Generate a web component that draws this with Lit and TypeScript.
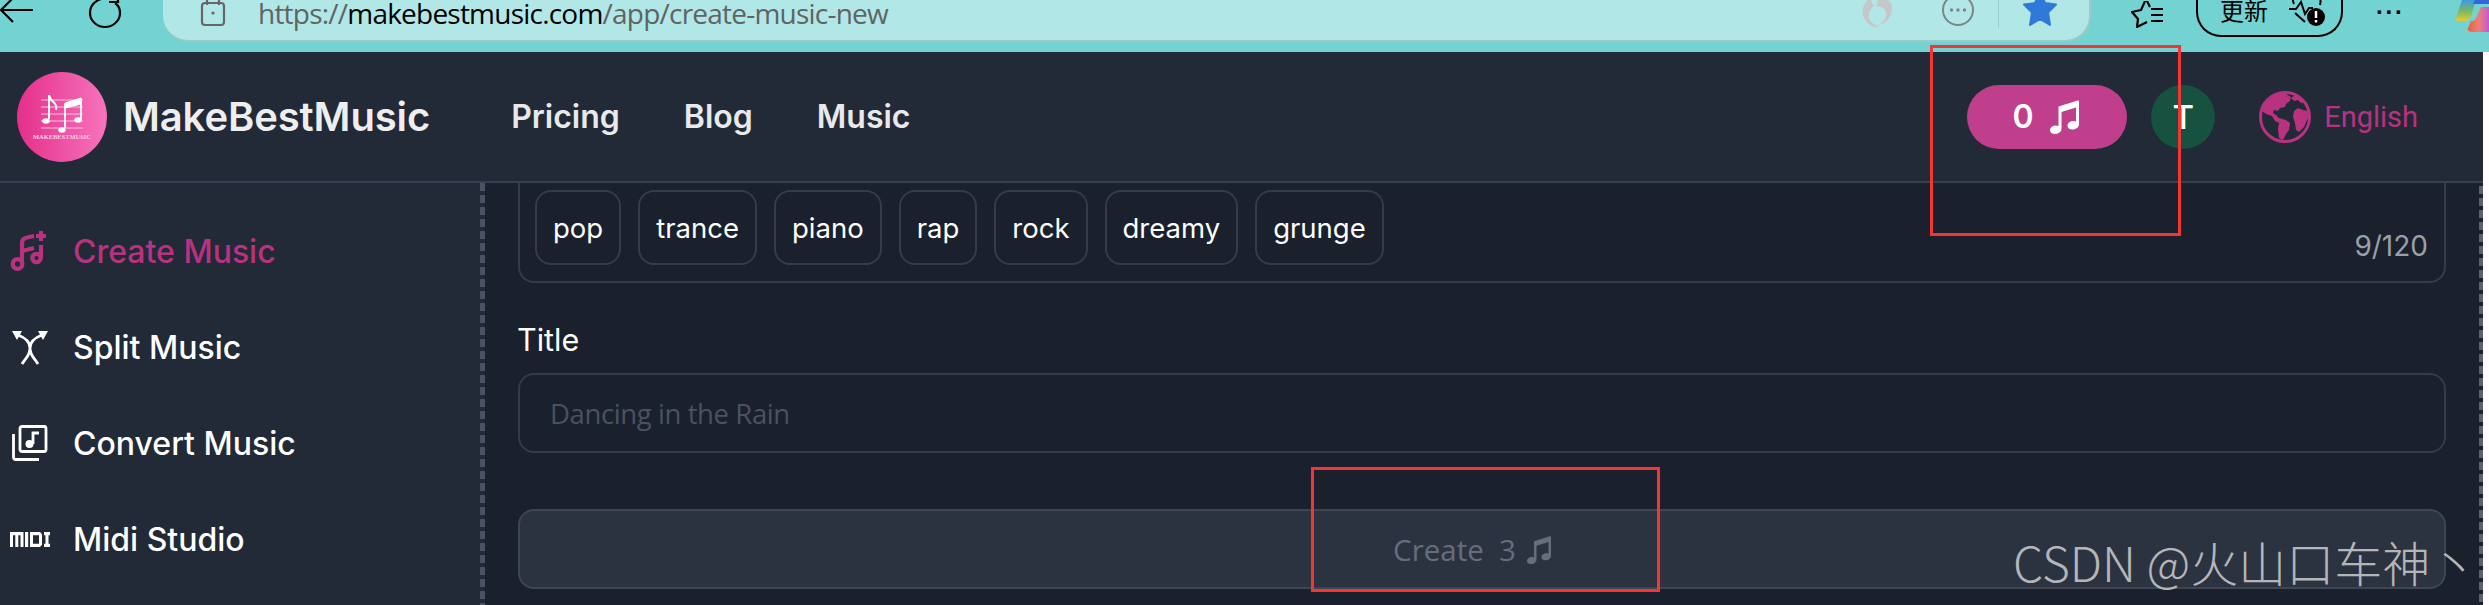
import { LitElement, html, css, svg } from "lit";
import { customElement } from "lit/decorators.js";

const note = svg`<path fill="currentColor" d="M8.500 7.500 27.500 1.500c.8-.2 1.500.3 1.500 1.200V25c0 3.200-2.900 5.500-6.400 5.500-3.200 0-5.100-1.500-5.100-3.700 0-2.700 2.900-4.700 6-4.700 1 0 1.800.2 2.500.5V8.500L11.500 13v16.500c0 3.200-2.900 5.500-6.400 5.500C2 35 0 33.500 0 31.300c0-2.700 2.900-4.700 6-4.700 1 0 1.800.2 2.500.5z"/>`;

@customElement("app-root")
export class AppRoot extends LitElement {
  static styles = css`
    :host { display: block; width: 2489px; height: 605px; overflow: hidden; position: relative; background: #fff; font-family: Inter, "Liberation Sans", sans-serif; }
    .chrome { height: 52px; background: #73d2d2; display: flex; align-items: flex-start; overflow: hidden; position: relative; color: #000; }
    .nav { width: 163px; flex: none; display: flex; gap: 52px; height: 42px; }
    .nav svg { flex: none; }
    .addr { width: 1928px; flex: none; height: 42px; box-sizing: border-box; background: #b1e8e7; border-bottom: 2px solid #9fc8c8; border-right: 2px solid #9fc8c8; border-radius: 0 0 26px 26px; display: flex; align-items: center; padding: 0 0 14px 37px; }
    .lock { flex: none; margin-right: 32px; }
    .url { font: 400 28px "Open Sans", sans-serif; color: #5f6464; white-space: nowrap; flex: 1; letter-spacing: -0.78px; }
    .url b { font-weight: 400; color: #000; }
    .addr-icons { display: flex; align-items: center; margin-right: 32px; }
    .sep { width: 1px; height: 30px; background: #97d0cf; margin: 0 24px; }
    .tools { display: flex; align-items: center; height: 42px; padding-bottom: 10px; box-sizing: border-box; margin-left: 40px; flex: none; }
    .update { width: 147px; height: 42px; margin: -1px 0 0 31px; box-sizing: border-box; border: 2px solid #000; border-top: none; border-radius: 0 0 25px 25px; display: flex; align-items: center; gap: 21px; padding: 0 0 10px 22px; font: 400 24px "Noto Sans CJK SC", sans-serif; }
    .dots { font: 700 24px "Liberation Sans", sans-serif; letter-spacing: 1.5px; margin-left: 33px; margin-top: -8px; }
    .copilot { position: absolute; left: 2453px; top: 0; }
    header { width: 2483px; height: 131px; box-sizing: border-box; background: #222937; border-bottom: 2px solid #374050; display: flex; align-items: center; padding: 0 65px 0 17px; }
    .brand { font-weight: 600; font-size: 40px; color: #eeeeef; margin-left: 16px; white-space: nowrap; letter-spacing: -0.12px; }
    .logo { flex: none; }
    .links { display: flex; gap: 64px; margin-left: 81px; flex: 1; }
    .links a { font-weight: 600; font-size: 32px; color: #e8e9eb; }
    .pill { width: 160px; height: 64px; border-radius: 32px; background: #bf3f8d; color: #fff; display: flex; align-items: center; justify-content: center; gap: 16px; font-weight: 600; font-size: 32px; flex: none; padding-right: 3px; box-sizing: border-box; }
    .avatar { width: 64px; height: 64px; border-radius: 50%; background: #175140; color: #fff; display: flex; align-items: center; justify-content: center; font-size: 33px; font-weight: 500; margin-left: 24px; flex: none; }
    .lang { display: flex; align-items: center; gap: 13px; margin-left: 44px; color: #b83280; font: 400 29px Roboto, sans-serif; flex: none; }
    .body { display: flex; width: 2483px; height: 422px; background: #1a202c; }
    aside { width: 480px; flex: none; box-sizing: border-box; background: #222937; display: flex; flex-direction: column; padding-top: 20px; }
    .dash-left { width: 5px; flex: none; background: repeating-linear-gradient(#4b5362 0 8px, #222937 8px 12px); }
    .dash-right { width: 4px; flex: none; background: repeating-linear-gradient(transparent 0 3px, #5a6170 3px 11px, transparent 11px 12px); }
    .item { height: 96px; display: flex; align-items: center; color: #fff; font-size: 32px; font-weight: 500; white-space: nowrap; }
    .item.on { color: #b83280; }
    .ic { width: 73px; flex: none; display: flex; justify-content: center; padding-right: 14px; box-sizing: border-box; }
    main { flex: 1; box-sizing: border-box; padding: 0 0 0 33px; display: flex; flex-direction: column; min-width: 0; }
    .tags { width: 1928px; height: 100px; box-sizing: border-box; border: 2px solid #343b49; border-top: none; border-radius: 0 0 16px 16px; display: flex; gap: 17px; padding: 7px 0 0 15px; position: relative; }
    .chip { height: 75px; box-sizing: border-box; border: 2px solid #343b49; border-radius: 16px; padding: 0 16px; display: flex; align-items: center; color: #fff; font-size: 27.500px; }
    .count { position: absolute; right: 16px; bottom: 18px; color: #9aa0a9; font-size: 28px; }
    .label { color: #fff; font-size: 30.500px; margin: 37px 0 0 -1px; line-height: 40px; }
    .input { width: 1928px; height: 80px; margin-top: 13px; box-sizing: border-box; border: 2px solid #343b49; border-radius: 16px; padding-left: 30px; display: flex; align-items: center; color: #4a5260; font: 400 27.500px "Open Sans", sans-serif; letter-spacing: -0.4px; }
    .btn { width: 1928px; height: 80px; margin-top: 56px; box-sizing: border-box; border: 2px solid #3f4552; border-radius: 16px; background: #2c3340; color: #666e7b; display: flex; align-items: center; justify-content: center; font: 400 29.500px "Open Sans", sans-serif; gap: 11px; white-space: pre; padding-right: 20px; }
    .red { position: absolute; box-sizing: border-box; border: 3px solid #f53535; pointer-events: none; }
    .r1 { left: 1930px; top: 45px; width: 251px; height: 191px; }
    .r2 { left: 1311px; top: 467px; width: 349px; height: 125px; }
    .mark { position: absolute; left: 2013px; top: 526px; font: 300 48px "Noto Sans CJK SC", sans-serif; line-height: 70px; color: #b5b6b9; white-space: nowrap; }
  `;

  render() {
    return html`
      <div class="chrome">
        <div class="nav">
          <svg width="36" height="30" viewBox="0 0 36 30" fill="none" stroke="#000" stroke-width="2.200"><path d="M33 10H1M13-2 1 10l12 12"/></svg>
          <svg width="38" height="30" viewBox="0 0 38 30" fill="none" stroke="#000" stroke-width="2.200"><path d="M24-1C12-4 2 3 2 13c0 8 7 14 15 14s15-6 15-14c0-4-2-8-5-10"/><path d="M30-6v8h-9"/></svg>
        </div>
        <div class="addr">
          <svg class="lock" width="26" height="30" viewBox="0 0 26 30" fill="none" stroke="#666" stroke-width="2.200"><path d="M7 7V0M19 7V0"/><rect x="2" y="5" width="22" height="22" rx="3"/><circle cx="13" cy="15" r="1.600" fill="#666" stroke="none"/></svg>
          <div class="url">https://<b>makebestmusic.com</b>/app/create-music-new</div>
          <div class="addr-icons">
            <svg width="32" height="30" viewBox="0 0 32 30" fill="#c4c8c8"><path d="M10 0c-8 4-11 14-6 22 3 5 9 8 15 7-7-2-12-7-11-13 0-3 2-6 5-8-2-3-3-5-3-8zM31 8c1 9-5 18-14 19 7-3 10-10 7-15-2-3-6-5-9-3 2-4 2-7 1-9h7c4 1 7 4 8 8z"/></svg>
            <svg style="margin-left:49px" width="32" height="30" viewBox="0 0 32 30" fill="none" stroke="#7d8585" stroke-width="2"><circle cx="16" cy="12" r="15"/><g fill="#7d8585" stroke="none"><circle cx="9.500" cy="12" r="1.700"/><circle cx="16" cy="12" r="1.700"/><circle cx="22.500" cy="12" r="1.700"/></g></svg>
            <div class="sep"></div>
            <svg width="34" height="30" viewBox="0 0 34 30" fill="#2f7ad8"><path d="M17-6l5 11 11 1.500-8 8L27 27l-10-6-10 6 2-12.500-8-8L12 5z" stroke="#2f7ad8" stroke-width="2" stroke-linejoin="round"/></svg>
          </div>
        </div>
        <div class="tools">
          <svg width="34" height="30" viewBox="0 0 34 30" fill="none" stroke="#000" stroke-width="2.200" stroke-linejoin="round"><path d="M19 6 15-2 10 9 1 11l6 7-1 8 10-5"/><path d="M20 8h12M20 14h12M20 20h12"/></svg>
          <div class="update"><span>更新</span><svg width="36" height="30" viewBox="0 0 36 30" fill="none" stroke="#000" stroke-width="2" style="margin-top:2px"><path d="M5 8C2 2 6-5 12-4c2 0 4 2 5 4 2-2 3-4 6-4 6 0 10 6 8 13"/><path d="M0 13h7l5-7 4 12 4-6h4M6 17l10 9"/><circle cx="27" cy="21" r="9" fill="#000" stroke="none"/><path d="M27 15v7M27 24v2.500" stroke="#fff" stroke-width="2.500"/></svg></div>
          <div class="dots">···</div>
        </div>
        <svg class="copilot" width="36" height="34" viewBox="0 0 36 34">
          <defs>
            <linearGradient id="cpa" x1="0" y1="0" x2="0" y2="1"><stop offset="0" stop-color="#3c9be0"/><stop offset=".55" stop-color="#7cbb5e"/><stop offset="1" stop-color="#e8c93a"/></linearGradient>
            <linearGradient id="cpb" x1="0" y1="0" x2="1" y2="0"><stop offset="0" stop-color="#e6603f"/><stop offset=".5" stop-color="#ef7f73"/><stop offset="1" stop-color="#c05ad8"/></linearGradient>
          </defs>
          <path d="M9 0h14l-5 16c-1 3-3 5-6 5H5c-2 0-3-2-2-4z" fill="url(#cpa)"/>
          <path d="M22 0h14v4H20z" fill="#3266d6"/>
          <path d="M28 7h8v25H20c-3 0-6-1-5-4l3-7c4 0 5-2 6-5z" fill="url(#cpb)"/>
        </svg>
      </div>
      <header>
        <svg class="logo" width="90" height="90" viewBox="0 0 90 90">
          <defs><linearGradient id="lg" x1="0" x2="1" y1="0" y2="0"><stop offset="0" stop-color="#e52f8a"/><stop offset="1" stop-color="#f773bc"/></linearGradient></defs>
          <circle cx="45" cy="45" r="45" fill="url(#lg)"/>
          <g stroke="#f9c6e2" stroke-width="1.200"><path d="M24 28h42M24 35h42M24 42h42M24 49h42M24 56h42"/></g>
          <g fill="#fff" stroke="#fff"><path d="M32 23v24M32 23c1 7 9 7 7 15" fill="none" stroke-width="2"/><ellipse cx="29" cy="49" rx="3.800" ry="2.800" stroke="none"/><path d="M48 31l16-5v6l-16 4z"/><path d="M48 31v25M64 26v21" fill="none" stroke-width="1.800"/><ellipse cx="45" cy="58" rx="3.800" ry="2.800" stroke="none"/><ellipse cx="61" cy="48" rx="3.800" ry="2.800" stroke="none"/></g>
          <text x="45" y="67" text-anchor="middle" font-size="6.400" font-weight="700" fill="#fbd3e8" font-family="'Liberation Serif',serif" textLength="58" lengthAdjust="spacingAndGlyphs">MAKEBESTMUSIC</text>
        </svg>
        <div class="brand">MakeBestMusic</div>
        <nav class="links"><a>Pricing</a><a>Blog</a><a>Music</a></nav>
        <div class="pill"><span>0</span><svg width="29" height="35" viewBox="0 0 29 35" style="color:#fff">${note}</svg></div>
        <div class="avatar">T</div>
        <div class="lang">
          <svg width="52" height="52" viewBox="0 0 52 52"><circle cx="26" cy="26" r="24.500" fill="none" stroke="#b83280" stroke-width="3"/><path fill="#b83280" d="M18 3c-8 3-13 10-15 17l4 3 6 2 3 5 4 2-1 6 1 9 4 2 3-6 3-4 1-7-4-3-7-2-3-3-3-2 1-3 4 1 2-3 5-1 1-3 4-3 1-4-5-3zM36 4l-4 3 3 3 4-1 3 3 4-1c-2-4-6-6-10-7zM39 17l-4 3-1 6 2 6 1 7 3 2 5-5 4-9v-7l-5-1z"/></svg>
          <span>English</span>
        </div>
      </header>
      <div class="body">
        <aside>
          <div class="item on"><span class="ic"><svg width="40" height="40" viewBox="0 0 40 40" fill="none" stroke="#b83280" stroke-width="4.200"><circle cx="7.500" cy="33" r="4.800"/><path d="M12 33V12c0-3 2-5 5-5.500l7-1.500M12 20l12-3"/><circle cx="26.500" cy="27" r="4.200"/><path d="M31 27V14M31 0v10M26 5h10"/></svg></span>Create Music</div>
          <div class="item"><span class="ic"><svg width="38" height="36" viewBox="0 0 38 36" fill="none" stroke="#fff" stroke-width="2.800"><path d="M11 35c4-7 8-8 8-16 0-6-4-10-12-13M27 35c-4-7-8-8-8-16 0-6 4-10 12-13"/><path d="M1 2l10 0-5 9zM37 2l-10 0 5 9z" fill="#fff" stroke="none"/></svg></span>Split Music</div>
          <div class="item"><span class="ic"><svg width="36" height="36" viewBox="0 0 36 36" fill="none" stroke="#fff" stroke-width="2.800"><rect x="8" y="1.500" width="26" height="25" rx="2"/><path d="M1.500 9v23c0 1.500 1 2.500 2.500 2.500h23"/><path d="M21 19V8h6"/><circle cx="17.500" cy="19" r="4" fill="#fff" stroke="none"/></svg></span>Convert Music</div>
          <div class="item"><span class="ic"><svg width="40" height="17" viewBox="0 0 40 16" preserveAspectRatio="none" fill="#fff"><path d="M0 1h13.500v14h-3V4H8.300v11H5.300V4H3v11H0zM15 1h3.200v14H15zM20 1h10l2 2v10l-2 2H20zM23 4v8h6V4zM34 1h6v3h-1.500v8H40v3h-6v-3h1.500V4H34z"/></svg></span>Midi Studio</div>
        </aside>
        <div class="dash-left"></div>
        <main>
          <div class="tags">
            ${["pop", "trance", "piano", "rap", "rock", "dreamy", "grunge"].map((t) => html`<span class="chip">${t}</span>`)}
            <span class="count">9/120</span>
          </div>
          <div class="label">Title</div>
          <div class="input">Dancing in the Rain</div>
          <div class="btn"><span>Create  3</span><svg width="24" height="29" viewBox="0 0 29 35" style="color:#666e7b">${note}</svg></div>
        </main>
        <div class="dash-right"></div>
      </div>
      <div class="red r1"></div>
      <div class="red r2"></div>
      <div class="mark">CSDN @火山口车神丶</div>
    `;
  }
}
